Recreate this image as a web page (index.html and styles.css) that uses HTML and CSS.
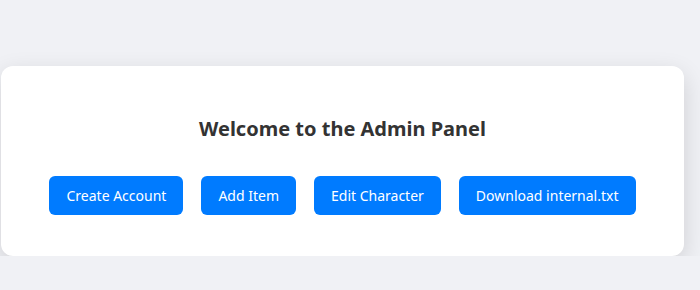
FILE: index.html
```html
<!DOCTYPE html>
<html lang="en">
<head>
<meta charset="UTF-8" />
<meta name="viewport" content="width=device-width, initial-scale=1" />
<title>Admin Panel</title>
<link rel="stylesheet" href="styles.css">
</head>
<body>

<div class="panel">
  <h2>Welcome to the Admin Panel</h2>
  <div class="actions">
    <button class="btn">Create Account</button>
    <button class="btn">Add Item</button>
    <button class="btn">Edit Character</button>
    <button class="btn">Download internal.txt</button>
  </div>
</div>

</body>
</html>
```

FILE: styles.css
```css
body {
  font-family: "Noto Sans", "Open Sans", sans-serif;
  margin: 0;
  padding: 66px 16px 0 1px;
  background: #f0f1f5;
  color: #333;
}
.panel {
  background: white;
  border-radius: 12px;
  box-shadow: 0 8px 24px rgb(0 0 0 / 0.14);
  padding: 41px 48px 41px;
  text-align: center;
}
.panel h2 {
  margin: 8px 0 34px;
  font-size: 20px;
  font-weight: bold;
  color: #333;
}
.actions {
  display: flex;
  justify-content: center;
  gap: 18px;
}
.btn {
  flex: none;
  white-space: nowrap;
  background: #007bff;
  color: white;
  border: none;
  border-radius: 6px;
  padding: 10px 17px;
  line-height: 19px;
  font-family: inherit;
  font-size: 14px;
  cursor: pointer;
}
.btn:hover {
  background: #0069d9;
}
```
